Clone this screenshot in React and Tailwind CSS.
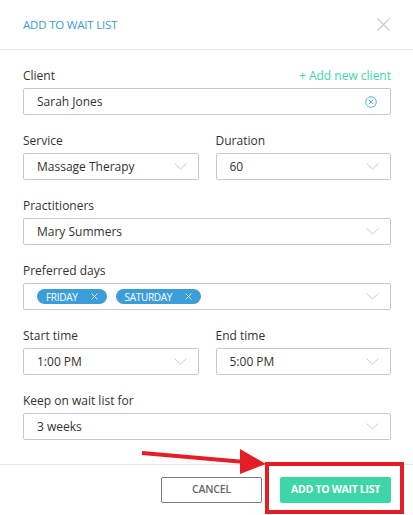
import React from 'react';

const Chevron = () => (
  <svg width="13" height="7" viewBox="0 0 13 7" fill="none" className="shrink-0">
    <path d="M0.5 0.5 L6.5 6 L12.5 0.5" stroke="#c6c6c6" strokeWidth="0.9" />
  </svg>
);

const Label = ({ children }) => (
  <div className="h-[16px] leading-[16px] text-[12px] text-[#333] mb-[4px]">{children}</div>
);

const Select = ({ value }) => (
  <div className="h-[27px] border border-[#c9c9c9] rounded-[2px] flex items-center justify-between pl-[13px] pr-[11px] text-[12px] text-[#333]">
    <span>{value}</span>
    <Chevron />
  </div>
);

const Tag = ({ text }) => (
  <div className="h-[15px] rounded-full bg-[#3c9ed8] text-white text-[10px] tracking-[-0.3px] flex items-center pl-[9px] pr-[9px] gap-[13px] leading-none">
    <span>{text}</span>
    <svg width="7" height="7" viewBox="0 0 7 7"><path d="M0.5 0.5 L6.5 6.5 M6.5 0.5 L0.5 6.5" stroke="#e6f2fb" strokeWidth="0.9" /></svg>
  </div>
);

export default function App() {
  return (
    <div className="relative w-[413px] h-[515px] bg-white overflow-hidden" style={{ fontFamily: '"Open Sans", "Liberation Sans", sans-serif' }}>
      {/* Header */}
      <div className="h-[50px] border-b border-[#e6e6e6] flex items-center justify-between pl-[23px] pr-[23px]">
        <span className="text-[11.5px] text-[#3a9ad9] tracking-[-0.2px]">ADD TO WAIT LIST</span>
        <svg width="13" height="13" viewBox="0 0 13 13"><path d="M0.5 0.5 L12.5 12.5 M12.5 0.5 L0.5 12.5" stroke="#c8c8c8" strokeWidth="1.1" /></svg>
      </div>

      {/* Form */}
      <div className="pt-[18px] pl-[23px] pr-[22px] flex flex-col gap-[18px]">
        <div>
          <div className="flex justify-between items-center h-[16px] mb-[4px]">
            <span className="text-[12px] text-[#333]">Client</span>
            <span className="text-[12px] text-[#3dd6a8]">+ Add new client</span>
          </div>
          <div className="h-[27px] border border-[#c9c9c9] rounded-[2px] flex items-center justify-between pl-[13px] pr-[13px] text-[12px] text-[#333]">
            <span>Sarah Jones</span>
            <svg width="12" height="12" viewBox="0 0 12 12">
              <circle cx="6" cy="6" r="5.3" fill="none" stroke="#5aaee3" strokeWidth="1" />
              <path d="M3.8 3.8 L8.2 8.2 M8.2 3.8 L3.8 8.2" stroke="#5aaee3" strokeWidth="1" />
            </svg>
          </div>
        </div>

        <div className="grid grid-cols-2 gap-[17px]">
          <div>
            <Label>Service</Label>
            <Select value="Massage Therapy" />
          </div>
          <div>
            <Label>Duration</Label>
            <Select value="60" />
          </div>
        </div>

        <div>
          <Label>Practitioners</Label>
          <Select value="Mary Summers" />
        </div>

        <div>
          <Label>Preferred days</Label>
          <div className="h-[27px] border border-[#c9c9c9] rounded-[2px] flex items-center justify-between pl-[13px] pr-[11px]">
            <div className="flex gap-[9px]">
              <Tag text="FRIDAY" />
              <Tag text="SATURDAY" />
            </div>
            <Chevron />
          </div>
        </div>

        <div className="grid grid-cols-2 gap-[17px]">
          <div>
            <Label>Start time</Label>
            <Select value="1:00 PM" />
          </div>
          <div>
            <Label>End time</Label>
            <Select value="5:00 PM" />
          </div>
        </div>

        <div>
          <Label>Keep on wait list for</Label>
          <Select value="3 weeks" />
        </div>
      </div>

      {/* Footer */}
      <div className="mt-[24px] border-t border-[#e6e6e6] pt-[12px] pr-[22px] flex justify-end gap-[18px]">
        <button className="w-[101px] h-[26px] border border-[#7a7a7a] rounded-[2px] text-[10.5px] font-semibold text-[#666] tracking-[-0.2px]">CANCEL</button>
        <button className="w-[111px] h-[26px] rounded-[2px] bg-[#3dd6a8] text-[10.5px] font-bold text-white tracking-[-0.3px]">ADD TO WAIT LIST</button>
      </div>

      {/* Annotation overlay */}
      <svg className="absolute left-0 top-0 pointer-events-none" width="413" height="515">
        <line x1="142" y1="453" x2="245" y2="462" stroke="#e31e24" strokeWidth="4" />
        <polygon points="240,449 266,464 240,474" fill="#e31e24" />
      </svg>
      <div className="absolute left-[265px] top-[462px] w-[139px] h-[52px] border-[4px] border-[#e31e24] pointer-events-none" />
    </div>
  );
}
